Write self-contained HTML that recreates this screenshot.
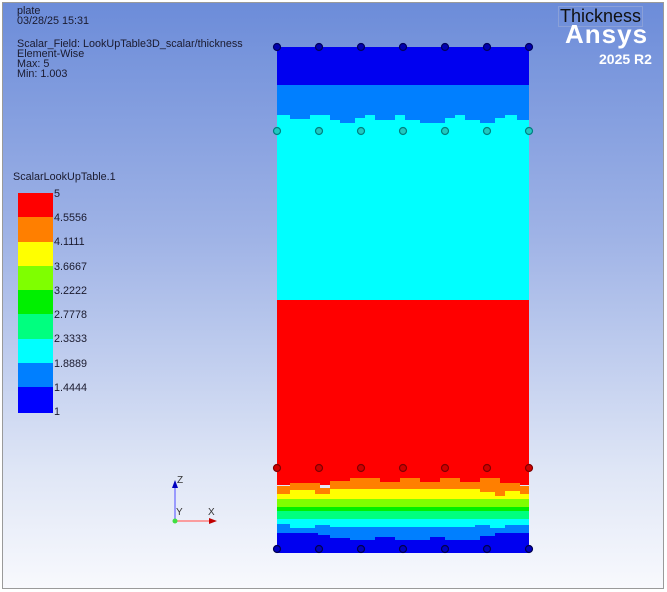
<!DOCTYPE html>
<html><head><style>
body{margin:0;width:667px;height:592px;overflow:hidden;background:#fff;font-family:"Liberation Sans",sans-serif}
#v{position:absolute;left:2px;top:2px;width:662px;height:587px;border:1px solid #9a9a9a;box-sizing:border-box;background:linear-gradient(#6c8cd9 0%,#9fb3e6 40%,#dfe6f6 80%,#f8f9fd 100%);overflow:hidden}
.t{position:absolute;font-size:10.8px;color:#1a1a2e;line-height:10px}
</style></head><body>
<div id="v"></div>
<div class="t" style="left:17px;top:6px">plate<br>03/28/25 15:31</div>
<div class="t" style="left:17px;top:39px">Scalar_Field: LookUpTable3D_scalar/thickness<br>Element-Wise<br>Max: 5<br>Min: 1.003</div>
<div class="t" style="left:13px;top:172px">ScalarLookUpTable.1</div>
<div style="position:absolute;left:558px;top:6px;border:1px solid #8aa0d8;padding:0 1px;font-size:18px;line-height:19px;color:#111">Thickness</div>
<div style="position:absolute;left:565px;top:20px;font-size:26px;font-weight:bold;color:#fff;line-height:28px;letter-spacing:1px">Ansys</div>
<div style="position:absolute;left:599px;top:51px;font-size:14px;font-weight:bold;color:#fff">2025 R2</div>
<svg width="667" height="592" style="position:absolute;left:0;top:0">
<g>
<rect x="18" y="193" width="35" height="25" fill="#f00"/>
<rect x="18" y="217" width="35" height="25" fill="#ff7f00"/>
<rect x="18" y="242" width="35" height="25" fill="#ff0"/>
<rect x="18" y="266" width="35" height="25" fill="#7fff00"/>
<rect x="18" y="290" width="35" height="25" fill="#00f000"/>
<rect x="18" y="314" width="35" height="25" fill="#00ff7f"/>
<rect x="18" y="339" width="35" height="25" fill="#0ff"/>
<rect x="18" y="363" width="35" height="25" fill="#007fff"/>
<rect x="18" y="387" width="35" height="26" fill="#0000ff"/>
</g>
<g font-size="10.8" fill="#1a1a2e" font-family="Liberation Sans">
<text x="54" y="197">5</text><text x="54" y="221">4.5556</text><text x="54" y="245">4.1111</text>
<text x="54" y="270">3.6667</text><text x="54" y="294">3.2222</text><text x="54" y="318">2.7778</text>
<text x="54" y="342">2.3333</text><text x="54" y="367">1.8889</text><text x="54" y="391">1.4444</text>
<text x="54" y="415">1</text>
</g>
<rect x="277" y="47" width="252" height="38" fill="#0000f0"/>
<rect x="277" y="85" width="252" height="38" fill="#007fff"/>
<path fill="#0ff" d="M277 115H290V119H310V115H330V120H340V123H355V118H365V115H375V120H395V115H405V120H420V123H445V118H455V115H465V120H480V123H495V118H505V115H517V120H529V300H277Z"/>
<rect x="277" y="300" width="252" height="185" fill="#f00"/>
<path fill="#ff7f00" d="M277 486H290V483H320V488H330V481H350V478H380V482H400V478H420V482H440V478H460V482H480V478H500V483H520V486H529V498H277Z"/>
<path fill="#ff0" d="M277 494H290V490H315V494H330V489H480V492H495V496H505V491H520V494H529V503H277Z"/>
<rect x="277" y="499" width="252" height="9" fill="#7fff00"/>
<rect x="277" y="507" width="252" height="5" fill="#00f000"/>
<rect x="277" y="511" width="252" height="9" fill="#00ff7f"/>
<rect x="277" y="519" width="252" height="9" fill="#0ff"/>
<path fill="#007fff" d="M277 524H290V528H315V525H330V527H475V525H490V528H505V525H529V540H277Z"/>
<path fill="#0000f0" d="M277 533H318V535H330V538H350V540H375V537H395V540H430V537H445V540H480V536H495V533H529V553H277Z"/>
<g stroke-width="1.2">
<g fill="#0000b0" stroke="#000060"><circle cx="277" cy="47" r="3.5"/><circle cx="319" cy="47" r="3.5"/><circle cx="361" cy="47" r="3.5"/><circle cx="403" cy="47" r="3.5"/><circle cx="445" cy="47" r="3.5"/><circle cx="487" cy="47" r="3.5"/><circle cx="529" cy="47" r="3.5"/></g>
<g fill="#20c8c0" stroke="#008080"><circle cx="277" cy="131" r="3.5"/><circle cx="319" cy="131" r="3.5"/><circle cx="361" cy="131" r="3.5"/><circle cx="403" cy="131" r="3.5"/><circle cx="445" cy="131" r="3.5"/><circle cx="487" cy="131" r="3.5"/><circle cx="529" cy="131" r="3.5"/></g>
<g fill="#d00000" stroke="#800000"><circle cx="277" cy="468" r="3.5"/><circle cx="319" cy="468" r="3.5"/><circle cx="361" cy="468" r="3.5"/><circle cx="403" cy="468" r="3.5"/><circle cx="445" cy="468" r="3.5"/><circle cx="487" cy="468" r="3.5"/><circle cx="529" cy="468" r="3.5"/></g>
<g fill="#0000c0" stroke="#000050"><circle cx="277" cy="549" r="3.5"/><circle cx="319" cy="549" r="3.5"/><circle cx="361" cy="549" r="3.5"/><circle cx="403" cy="549" r="3.5"/><circle cx="445" cy="549" r="3.5"/><circle cx="487" cy="549" r="3.5"/><circle cx="529" cy="549" r="3.5"/></g>
</g>
<line x1="175" y1="521" x2="175" y2="485" stroke="#8080ff" stroke-width="1.5"/>
<polygon points="172,488 178,488 175,480" fill="#0000c0"/>
<line x1="175" y1="521" x2="212" y2="521" stroke="#ff8080" stroke-width="1.5"/>
<polygon points="209,518 209,524 217,521" fill="#c00000"/>
<circle cx="175" cy="521" r="2.5" fill="#40e040"/>
<g font-size="10" fill="#333" font-family="Liberation Sans"><text x="177" y="483">Z</text><text x="176" y="515">Y</text><text x="208" y="515">X</text></g>
</svg>
</body></html>
